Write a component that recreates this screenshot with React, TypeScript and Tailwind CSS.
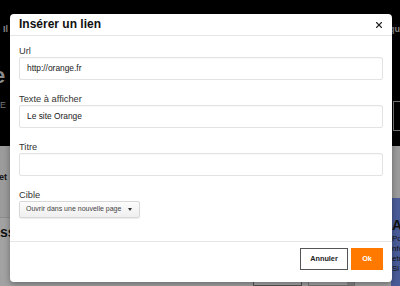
import { X } from 'lucide-react';

const font = { fontFamily: '"Liberation Sans", Arial, sans-serif' };

function Field({ label, value }: { label: string; value?: string }) {
  return (
    <div className="flex flex-col">
      <label className="text-[9.3px] leading-[12px] text-[#333]">{label}</label>
      <div className="h-[23px] border border-[#e3e3e3] rounded-[2px] bg-white flex items-center px-[7px] text-[8.4px] text-[#222] shadow-[inset_0_1px_1px_rgba(0,0,0,0.03)]">
        {value}
      </div>
    </div>
  );
}

export default function App() {
  return (
    <div className="relative w-[400px] h-[286px] overflow-hidden bg-black" style={font}>
      {/* page behind the overlay */}
      <div className="flex flex-col h-full">
        <div className="h-[152px] bg-black">
          <div className="flex justify-between pt-[23px] text-[9px] text-[#8a8a8a] font-bold">
            <span className="pl-[3px]">Il</span>
            <span>qu</span>
          </div>
          <div className="mt-[28px] text-[22px] font-bold text-[#8c8c8c] leading-none -ml-[7px]">e</div>
          <div className="flex justify-between mt-[14px]">
            <span className="text-[9px] text-[#777] leading-none">E</span>
            <div className="w-[7px] h-[30px] border border-[#777] border-r-0" />
          </div>
        </div>
        <div className="h-[54px] bg-[#9b9b9b] flex items-center">
          <span className="text-[9px] font-bold text-[#111] -ml-[1px] mt-[12px]">et</span>
        </div>
        <div className="flex flex-1">
          <div className="flex-1 bg-[#9b9b9b] flex flex-col">
            <div className="h-[19px]" />
            <div className="border-t border-[#8d8d8d] bg-[#a2a2a2] flex-1 pt-[2px]">
              <span className="text-[14px] font-bold text-[#111] leading-none">ss</span>
              <div className="flex gap-[6px] mt-[34px] ml-[253px]">
                <div className="w-[49px] h-[8px] border border-[#555] bg-[#a8a8a8]" />
                <div className="w-[47px] h-[8px] border border-[#777] bg-[#a8a8a8] flex justify-end">
                  <div className="w-[7px] h-full bg-[#888]" />
                </div>
              </div>
            </div>
          </div>
          <div className="w-[9px] bg-[#4a5c98] pt-[20px] pl-[1px] text-[#111] leading-none">
            <div className="text-[14px] font-bold">A</div>
            <div className="text-[8px] mt-[3px] whitespace-nowrap">Po</div>
            <div className="text-[8px] mt-[2px] whitespace-nowrap">nfo</div>
            <div className="text-[8px] mt-[2px] whitespace-nowrap">etr</div>
            <div className="text-[8px] mt-[2px] whitespace-nowrap">Si</div>
          </div>
        </div>
      </div>

      {/* modal */}
      <div className="absolute left-[10px] top-[14px] w-[382px] h-[268px] bg-white rounded-[4px] shadow-[0_2px_6px_rgba(0,0,0,0.35)] flex flex-col">
        <div className="h-[22px] border-b border-[#e6e6e6] flex items-center justify-between pl-[9px] pr-[8px]">
          <h1 className="text-[12px] font-bold text-[#111] leading-[21px]">Insérer un lien</h1>
          <X className="w-[10px] h-[10px] text-[#222]" strokeWidth={2.6} />
        </div>
        <div className="h-[205px] px-[9px] pt-[9px] flex flex-col gap-[13px]">
          <Field label="Url" value="http://orange.fr" />
          <Field label="Texte à afficher" value="Le site Orange" />
          <Field label="Titre" />
          <div className="flex flex-col">
            <label className="text-[9.3px] leading-[12px] text-[#333]">Cible</label>
            <button className="self-start w-[121px] h-[17px] border border-[#d8d8d8] rounded-[2px] bg-gradient-to-b from-[#fcfcfc] to-[#efefef] flex items-center pl-[6px] gap-[7px] text-[7px] text-[#444] shadow-[0_1px_1px_rgba(0,0,0,0.08)]">
              <span>Ouvrir dans une nouvelle page</span>
              <span className="w-0 h-0 border-l-[2.5px] border-r-[2.5px] border-t-[3px] border-l-transparent border-r-transparent border-t-[#333]" />
            </button>
          </div>
        </div>
        <div className="border-t border-[#e6e6e6] flex justify-end gap-[3px] px-[9px] pt-[6px]">
          <button className="w-[48px] h-[22px] border-[1.5px] border-[#555] bg-white text-[7.3px] font-bold text-[#222]">
            Annuler
          </button>
          <button className="w-[32px] h-[22px] bg-[#ff7900] text-[7.3px] font-bold text-white">Ok</button>
        </div>
      </div>
    </div>
  );
}
